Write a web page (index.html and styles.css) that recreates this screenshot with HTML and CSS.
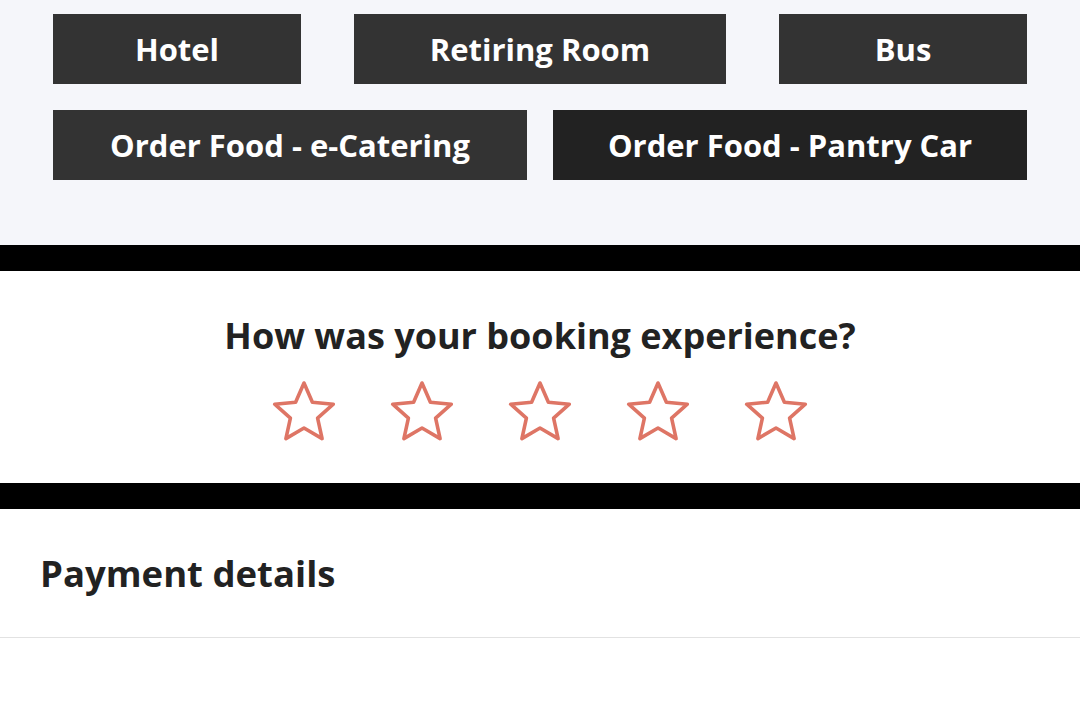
FILE: index.html
```html
<!DOCTYPE html>
<html>
<head>
<meta charset="utf-8">
<link rel="stylesheet" href="styles.css">
</head>
<body>
<section class="services">
  <div class="row row-three">
    <a class="svc-btn">Hotel</a>
    <a class="svc-btn">Retiring Room</a>
    <a class="svc-btn">Bus</a>
  </div>
  <div class="row row-two">
    <a class="svc-btn">Order Food - e-Catering</a>
    <a class="svc-btn svc-active">Order Food - Pantry Car</a>
  </div>
</section>
<div class="black-bar"></div>
<section class="rating">
  <h2 class="rating-title">How was your booking experience?</h2>
  <div class="stars">
    <svg class="star" viewBox="0 0 64 64"><path d="M32 3 L40.4 22.2 L61.3 24.2 L45.6 38.1 L50.1 58.6 L32 48 L13.9 58.6 L18.4 38.1 L2.7 24.2 L23.6 22.2 Z"/></svg>
    <svg class="star" viewBox="0 0 64 64"><path d="M32 3 L40.4 22.2 L61.3 24.2 L45.6 38.1 L50.1 58.6 L32 48 L13.9 58.6 L18.4 38.1 L2.7 24.2 L23.6 22.2 Z"/></svg>
    <svg class="star" viewBox="0 0 64 64"><path d="M32 3 L40.4 22.2 L61.3 24.2 L45.6 38.1 L50.1 58.6 L32 48 L13.9 58.6 L18.4 38.1 L2.7 24.2 L23.6 22.2 Z"/></svg>
    <svg class="star" viewBox="0 0 64 64"><path d="M32 3 L40.4 22.2 L61.3 24.2 L45.6 38.1 L50.1 58.6 L32 48 L13.9 58.6 L18.4 38.1 L2.7 24.2 L23.6 22.2 Z"/></svg>
    <svg class="star" viewBox="0 0 64 64"><path d="M32 3 L40.4 22.2 L61.3 24.2 L45.6 38.1 L50.1 58.6 L32 48 L13.9 58.6 L18.4 38.1 L2.7 24.2 L23.6 22.2 Z"/></svg>
  </div>
</section>
<div class="black-bar"></div>
<section class="payment">
  <h2 class="payment-title">Payment details</h2>
</section>
</body>
</html>
```
FILE: styles.css
```css
html, body {
  margin: 0;
  padding: 0;
  background: #ffffff;
  font-family: "Open Sans", "Noto Sans", sans-serif;
}

.services {
  background: #f5f6fa;
  padding: 14px 53px 65px;
  display: flex;
  flex-direction: column;
  gap: 26px;
}

.row {
  display: grid;
}

.row-three {
  grid-template-columns: 2fr 3fr 2fr;
  gap: 53px;
}

.row-two {
  grid-template-columns: 1fr 1fr;
  gap: 26px;
}

.svc-btn {
  height: 70px;
  background: #333333;
  color: #ffffff;
  font-weight: 700;
  font-size: 31px;
  display: flex;
  align-items: center;
  justify-content: center;
  white-space: nowrap;
}

.svc-active {
  background: #222222;
}

.black-bar {
  height: 26px;
  background: #000000;
}

.rating {
  height: 212px;
  box-sizing: border-box;
  padding-top: 43px;
  display: flex;
  flex-direction: column;
  align-items: center;
}

.rating-title {
  margin: 0;
  font-size: 36px;
  font-weight: 700;
  color: #222222;
  line-height: 44px;
}

.stars {
  margin-top: 22px;
  display: flex;
  gap: 54px;
}

.star {
  width: 64px;
  height: 64px;
  fill: none;
  stroke: #de7565;
  stroke-width: 3.6;
  stroke-linejoin: round;
}

.payment {
  height: 129px;
  box-sizing: border-box;
  border-bottom: 1px solid #e2e2e2;
  padding: 0 40px;
  display: flex;
  align-items: center;
}

.payment-title {
  margin: 0;
  font-size: 36.5px;
  font-weight: 700;
  color: #222222;
}
```
